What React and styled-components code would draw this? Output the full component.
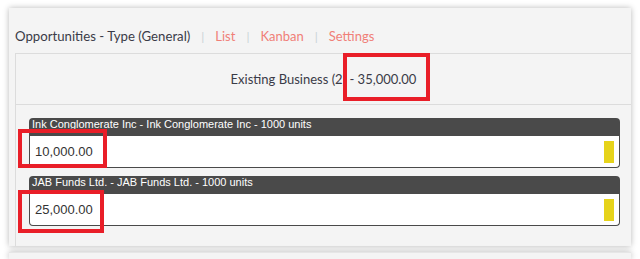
import React from 'react';
import styled, { createGlobalStyle } from 'styled-components';

const GlobalStyle = createGlobalStyle`
  html, body {
    margin: 0;
    padding: 0;
    background: #ffffff;
    overflow: hidden;
  }
`;

const Page = styled.div`
  position: relative;
  width: 640px;
  height: 259px;
  padding: 8px 0 0 9px;
  box-sizing: border-box;
  overflow: hidden;
  font-family: Lato, "Open Sans", sans-serif;
`;

const Panel = styled.section`
  width: 622px;
  height: 238px;
  background: #f4f4f4;
  box-shadow: 0 0 6px rgba(0, 0, 0, 0.28);
  padding-left: 6px;
  box-sizing: border-box;
  display: flex;
  flex-direction: column;
  margin-bottom: 6px;
`;

const NextPanel = styled(Panel)`
  height: 7px;
  border-top: 1px solid #e6e6e6;
`;

const TitleBar = styled.div`
  height: 45px;
  display: flex;
  align-items: center;
  padding-top: 11px;
  box-sizing: border-box;
  font-size: 13px;
  gap: 11px;
`;

const Title = styled.span`
  color: #3a3b47;
  font-size: 13.2px;
`;

const Sep = styled.span`
  color: #c9d2d6;
  font-size: 12px;
`;

const NavLink = styled.a`
  color: #f07f78;
  text-decoration: none;
`;

const Column = styled.div`
  flex: 1;
  border-left: 1px solid #dcdcdc;
  border-top: 1px solid #dcdcdc;
  display: flex;
  flex-direction: column;
`;

const ColumnHeader = styled.div`
  height: 50px;
  border-bottom: 1px solid #dcdcdc;
  display: flex;
  align-items: center;
  justify-content: center;
  font-size: 13px;
  color: #3a3b47;
`;

const Cards = styled.div`
  padding: 13px 11px 0 13px;
  display: flex;
  flex-direction: column;
  gap: 8px;
`;

const Card = styled.div`
  display: flex;
  flex-direction: column;
`;

const CardHead = styled.div`
  height: 18px;
  background: #4a4a4a;
  border-radius: 4px 4px 0 0;
  color: #ffffff;
  font-family: "Liberation Sans", Arial, sans-serif;
  font-size: 11px;
  line-height: 13px;
  padding-left: 3px;
  overflow: hidden;
  white-space: nowrap;
`;

const CardBody = styled.div`
  height: 32px;
  background: #ffffff;
  border: 1px solid #4a4a4a;
  border-top: none;
  border-radius: 0 0 4px 4px;
  display: flex;
  align-items: center;
  justify-content: space-between;
  padding: 0 5px 0 5px;
  box-sizing: border-box;
`;

const Amount = styled.span`
  font-family: "Liberation Sans", Arial, sans-serif;
  font-size: 13px;
  color: #333333;
`;

const Flag = styled.span`
  width: 10px;
  height: 22px;
  background: #e6d31a;
`;

const Mark = styled.div`
  position: absolute;
  border: 4px solid #e91e28;
  box-sizing: border-box;
  pointer-events: none;
`;

const cards = [
  { title: 'Ink Conglomerate Inc - Ink Conglomerate Inc - 1000 units', amount: '10,000.00' },
  { title: 'JAB Funds Ltd. - JAB Funds Ltd. - 1000 units', amount: '25,000.00' },
];

const marks = [
  { left: 343, top: 53, width: 87, height: 48 },
  { left: 18, top: 129, width: 89, height: 39 },
  { left: 18, top: 190, width: 86, height: 43 },
];

const App = () => (
  <>
    <GlobalStyle />
    <Page>
      <Panel>
        <TitleBar>
          <Title>Opportunities - Type (General)</Title>
          <Sep>|</Sep>
          <NavLink>List</NavLink>
          <Sep>|</Sep>
          <NavLink>Kanban</NavLink>
          <Sep>|</Sep>
          <NavLink>Settings</NavLink>
        </TitleBar>
        <Column>
          <ColumnHeader>Existing Business (2) - 35,000.00</ColumnHeader>
          <Cards>
            {cards.map((c) => (
              <Card key={c.title}>
                <CardHead>{c.title}</CardHead>
                <CardBody>
                  <Amount>{c.amount}</Amount>
                  <Flag />
                </CardBody>
              </Card>
            ))}
          </Cards>
        </Column>
      </Panel>
      <NextPanel />
      {marks.map((m, i) => (
        <Mark key={i} style={m} />
      ))}
    </Page>
  </>
);

export default App;
